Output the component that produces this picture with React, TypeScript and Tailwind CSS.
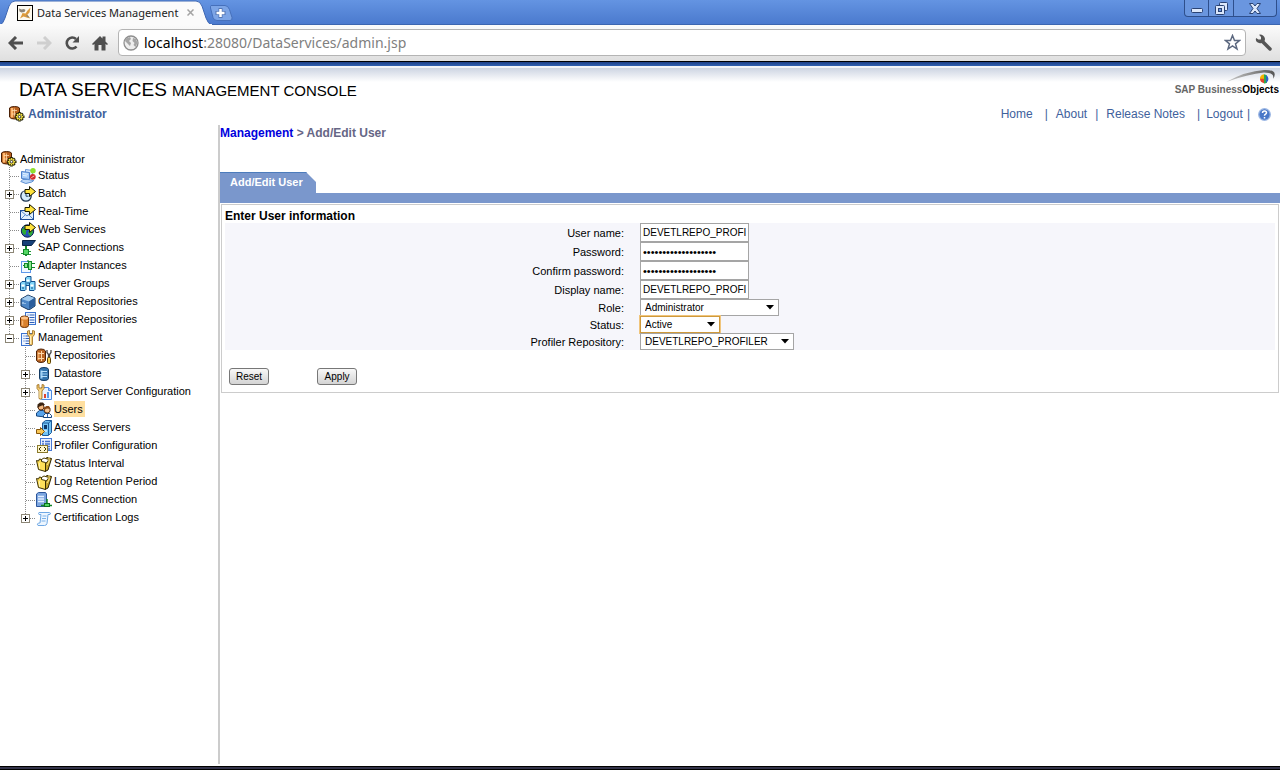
import React, { useState } from "react";

type IconProps = { className?: string };

const Svg = ({ children, className = "" }: { children: React.ReactNode; className?: string }) => (
  <svg viewBox="0 0 16 16" width="16" height="16" className={`shrink-0 ${className}`} aria-hidden="true">
    {children}
  </svg>
);

const Cylinder = ({ x, y, w, h, fill, light, dark }: { x: number; y: number; w: number; h: number; fill: string; light: string; dark: string }) => (
  <g>
    <path
      d={`M${x} ${y + 2}q0-2 ${w / 2}-2t${w / 2} 2v${h - 4}q0 2-${w / 2} 2t-${w / 2}-2z`}
      fill={fill}
      stroke={dark}
    />
    <path d={`M${x + 2} ${y + 3}v${h - 5}`} stroke={light} strokeWidth="2" />
    <path d={`M${x + 1} ${y + h / 2}h${w - 2}`} stroke={light} />
  </g>
);

const Arrow = () => (
  <path d="M5 3.500h4.500V.5L15.500 5.500l-6 5V7.500H5z" fill="#ffe23d" stroke="#1a1a00" strokeLinejoin="round" />
);

const AdminIcon = ({ className }: IconProps) => (
  <Svg className={className}>
    <path d="M.5 2q1-1.500 5-1.500t5 1.500v9q-1 2-5 2t-5-2z" fill="#b8601e" stroke="#4a2006" />
    <path d="M3 2v9.500" stroke="#ffb870" strokeWidth="2.500" />
    <path d="M3 4.500h5M3 8h4M5.500 2.500v8" stroke="#ffdcae" strokeWidth=".8" />
    <path d="M10.500 6v9.500M5.800 10.700h9.700M7.200 7.400l6.600 6.600M13.800 7.400L7.200 14" stroke="#1a1a00" strokeWidth="2.600" />
    <path d="M10.500 7v7.500M6.800 10.700h7.500M7.900 8.100l5.200 5.200M13.100 8.100l-5.200 5.200" stroke="#f8e545" strokeWidth="1.500" />
    <circle cx="10.500" cy="10.700" r="1.300" fill="#fff" stroke="#333" />
  </Svg>
);

const StatusIcon = () => (
  <Svg>
    <path d="M5.500 1.500l7 1v6l-7 .5z" fill="#d9ebff" stroke="#6c98d8" />
    <path d="M1.500 3.500l8 1v7l-8-1z" fill="#a5cbf8" stroke="#4d7fc9" />
    <path d="M3 5.500l5 .7M3 7.500l4 .5" stroke="#e8f4ff" />
    <path d="M.8 13.500l2-2h5l6 1-2 1.500-6 1.500z" fill="#bcd8f8" stroke="#5d8fd2" />
    <circle cx="13" cy="2.800" r="2.700" fill="#8fe02c" />
    <circle cx="12.800" cy="8.800" r="2.900" fill="#d22c2c" />
    <path d="M11.300 9.700l3-1.800" stroke="#ffb9b0" />
  </Svg>
);

const BatchIcon = () => (
  <Svg>
    <circle cx="6" cy="10" r="5.200" fill="#d5ecfb" stroke="#1c3450" strokeWidth="1.300" />
    <path d="M6 7v3.200h2.500" fill="none" stroke="#244466" />
    <path d="M2.500 7.500l1.500-2" stroke="#fff" />
    <Arrow />
  </Svg>
);

const RealTimeIcon = () => (
  <Svg>
    <rect x="0.500" y="6.500" width="13" height="9" fill="#e2effd" stroke="#1e4c9a" />
    <path d="M1 7l6 5 6-5M1 15l4.500-4.500M13 15l-4.500-4.500" fill="none" stroke="#5b8cce" />
    <Arrow />
  </Svg>
);

const WebIcon = () => (
  <Svg>
    <circle cx="7.500" cy="9" r="6.200" fill="#2752b8" stroke="#0c2152" />
    <path d="M2 7l4-2 2 2-2 2v3l-2 1-2-3zM8 10l4-2 1 2-2 4-2-1z" fill="#2eab32" />
    <path d="M3 5l3-2 3 1-3 2z" fill="#6edb62" />
    <Arrow />
  </Svg>
);

const SapIcon = () => (
  <Svg>
    <path d="M2.500 .5h13L11.500 5.500h-9z" fill="#174078" stroke="#0b2448" />
    <path d="M6 6v10" stroke="#178a2c" strokeWidth="2" />
    <path d="M1 13.500h3M8 11.500h3M8 14.500h3" stroke="#1c9a34" />
    <rect x="3.500" y="9.500" width="5" height="5" fill="#53d863" stroke="#178a2c" />
  </Svg>
);

const AdapterIcon = () => (
  <Svg>
    <rect x="1.500" y="3.500" width="9" height="11" fill="#f0f7ff" stroke="#5e97ea" />
    <path d="M3 7.500h4M11 5.500h4M11 9.500h4M8 2v2" stroke="#128528" strokeWidth="1.200" />
    <rect x="4.500" y="5.500" width="3" height="4" fill="#8aea90" stroke="#138929" />
    <rect x="8.500" y="3.500" width="3" height="8" fill="#8aea90" stroke="#138929" />
  </Svg>
);

const ServerBox = ({ x, y }: { x: number; y: number }) => (
  <g>
    <path d={`M${x} ${y + 1.5}l1.500-1.500h4v8l-1 1H${x}z`} fill="#7fd4f8" stroke="#12508e" />
    <rect x={x + 1} y={y + 3} width="3" height="2" fill="#fff" />
    <path d={`M${x + 1.5} ${y + 6.5}h2`} stroke="#114c88" />
  </g>
);

const ServerGroupIcon = () => (
  <Svg>
    <ServerBox x={5.5} y={0.5} />
    <ServerBox x={0.5} y={5.5} />
    <ServerBox x={9.5} y={5.5} />
  </Svg>
);

const CentralIcon = () => (
  <Svg>
    <path d="M1 5l7-4 7 3v8l-6 4-8-4z" fill="#4c86c6" stroke="#17365c" />
    <path d="M1.500 5L8 1.500 14.500 4 9 7.500z" fill="#a3cbee" />
    <path d="M9 7.500L14.500 4v7.500L9 15z" fill="#2c5e9c" />
    <path d="M3 8v2M5 9v1" stroke="#d6ecff" />
  </Svg>
);

const ListPage = ({ x, y }: { x: number; y: number }) => (
  <g>
    <rect x={x} y={y} width="10" height="12" fill="#eef5ff" stroke="#3c73d0" />
    <path d={`M${x + 2} ${y + 2.5}h1M${x + 4} ${y + 2.5}h5M${x + 2} ${y + 5}h1M${x + 4} ${y + 5}h5M${x + 2} ${y + 7.5}h1M${x + 4} ${y + 7.5}h5M${x + 4} ${y + 10}h5`} stroke="#2f5fb8" />
  </g>
);

const ProfilerIcon = () => (
  <Svg>
    <ListPage x={5.5} y={0.5} />
    <path d="M.5 6q0-2 4-2t4 2v7.500q0 2-4 2t-4-2z" fill="#d9812f" stroke="#6f3409" />
    <ellipse cx="4.500" cy="6" rx="3.500" ry="1.500" fill="#ffc48a" />
    <path d="M2.500 8.500v5" stroke="#f7b474" strokeWidth="1.500" />
  </Svg>
);

const Wrench = ({ x }: { x: number }) => (
  <g transform={`translate(${x} 0)`}>
    <path
      d="M.5 1v3.500L2.500 7v7.500q1.500 1.500 3 0V7l2-2.500V1L5.500.5V4h-3V.5z"
      fill="#f6cf76"
      stroke="#9a6a1c"
      strokeWidth=".8"
    />
    <path d="M3.500 6v8" stroke="#fff0c0" />
  </g>
);

const ManagementIcon = () => (
  <Svg>
    <ListPage x={1.5} y={3.5} />
    <Wrench x={7} />
  </Svg>
);

const RepositoriesIcon = () => (
  <Svg>
    <path d="M.5 3q1-2 4.500-2t4.500 2v9.500q-1 2-4.500 2t-4.500-2z" fill="#b96524" stroke="#4f2306" />
    <path d="M2.500 4v8" stroke="#eda45e" strokeWidth="2" />
    <path d="M2 5.500h6M2 10.500h6M5.500 3v10" stroke="#ffd9a8" />
    <path d="M11 2v2.500l1.500 2v3h1v-3l1.500-2V2" fill="none" stroke="#4a4a4a" strokeWidth="1.300" />
    <rect x="11.500" y="9.500" width="3" height="6" rx="1" fill="#f8d14c" stroke="#5e4200" />
  </Svg>
);

const DatastoreIcon = () => (
  <Svg>
    <Cylinder x={3.5} y={1.5} w={9} h={13} fill="#3274ae" light="#9ed0f4" dark="#123a62" />
    <path d="M5 5.500h6M5 10.500h6" stroke="#b9e0fa" />
  </Svg>
);

const ReportIcon = () => (
  <Svg>
    <path d="M5.500 3.500h7l3 3v9h-10z" fill="#e9f3ff" stroke="#4d8ae0" />
    <path d="M12.500 3.500v3h3" fill="#9cc4f5" stroke="#4d8ae0" />
    <rect x="8" y="10" width="2" height="4" fill="#e0442d" />
    <rect x="11" y="8" width="2" height="6" fill="#5c9be8" />
    <Wrench x={0.5} />
  </Svg>
);

const UsersIcon = () => (
  <Svg>
    <path d="M.5 14v-3l3-2.500h4l2 3V15z" fill="#57a2ea" stroke="#16457c" />
    <circle cx="5" cy="5" r="3" fill="#f3b880" stroke="#5b3010" />
    <path d="M1.500 6V2.500L4 .5h3L9 3 6 3.500 3.500 4.500z" fill="#3a2412" />
    <path d="M7.500 15.500v-2l2-2h4l2 2v2z" fill="#f4f8ff" stroke="#16457c" />
    <circle cx="11.200" cy="8" r="3" fill="#f8c795" stroke="#5b3010" />
    <path d="M8 8V5.500L10.500 4H13l1.700 3L11 6.500z" fill="#8a4a18" />
    <path d="M11.500 12v3" stroke="#2a64b8" />
  </Svg>
);

const AccessIcon = () => (
  <Svg>
    <path d="M6.500 3l3-2.500h6v12l-3 3h-6z" fill="#72c3f5" stroke="#1c5a9a" />
    <path d="M12.500 3v12M6.500 3h6l3-2.500" fill="none" stroke="#1c5a9a" />
    <rect x="8" y="5" width="3" height="4" fill="#0c3768" />
    <path d="M8 11h3" stroke="#fff" />
    <path d="M.5 9.500h4v-2l4 4-4 4v-2h-4z" fill="#f8c655" stroke="#86560c" />
  </Svg>
);

const ProfilerConfigIcon = () => (
  <Svg>
    <rect x="4.500" y=".5" width="11" height="12" fill="#eaf1ff" stroke="#4a79d4" />
    <path d="M6 3.500h2M9 3.500h5M6 6h2M9 6h5M9 8.500h5M11 11h3" stroke="#4673cc" strokeWidth="1.300" />
    <rect x="1.500" y="7.500" width="10" height="7" fill="#fff7cd" stroke="#8b7a2c" />
    <path d="M5 9l-2 2 2 2M8 9l2 2-2 2" fill="none" stroke="#3c3200" />
  </Svg>
);

const FolderIcon = () => (
  <Svg>
    <path d="M8 4l3-2.500 4.500 1L12 14l-3 1.500z" fill="#c9a62a" stroke="#2b2200" />
    <path d="M3 5l5-3 5 1.500-4 5z" fill="#fff" stroke="#4d3d00" />
    <path d="M.5 4.500l2 .5 1-2 2 .5v2l4 1v9l-7-2z" fill="#ffe05a" stroke="#3b2f00" />
    <path d="M3.500 7v6" stroke="#fff3a8" />
    <path d="M13 1v5l-2 3" fill="none" stroke="#ffe98a" />
  </Svg>
);

const CmsIcon = () => (
  <Svg>
    <path d="M.5 2l2-1.500h7l1 1.500v11l-2 1.500h-8z" fill="#7ca6e0" stroke="#2c569c" />
    <path d="M2 4.500h6M2 7h6M2 9.500h6" stroke="#e2efff" strokeWidth="1.300" />
    <path d="M5 13.500h11M11 7v5" stroke="#128528" strokeWidth="1.500" />
    <rect x="8.500" y="11.500" width="5" height="3" fill="#4fd85e" stroke="#0c7020" />
  </Svg>
);

const CertIcon = () => (
  <Svg>
    <path d="M3 2.500h10.500q1.500 0 .5 2h-2l-1 9q-.5 2-2.500 2H2q-1.500-1.500.5-2.500H4L5 4.500H3q-1-1 0-2z" fill="#edf6ff" stroke="#6fa8e4" />
    <path d="M6.500 6h4M6 8.500h4M5.500 11h4" stroke="#7db2e8" />
  </Svg>
);

type Node = { label: string; icon: () => React.ReactElement; expand?: "+" | "-"; current?: boolean; children?: Node[] };

const tree: Node[] = [
  { label: "Status", icon: StatusIcon },
  { label: "Batch", icon: BatchIcon, expand: "+" },
  { label: "Real-Time", icon: RealTimeIcon },
  { label: "Web Services", icon: WebIcon },
  { label: "SAP Connections", icon: SapIcon, expand: "+" },
  { label: "Adapter Instances", icon: AdapterIcon },
  { label: "Server Groups", icon: ServerGroupIcon, expand: "+" },
  { label: "Central Repositories", icon: CentralIcon, expand: "+" },
  { label: "Profiler Repositories", icon: ProfilerIcon, expand: "+" },
  {
    label: "Management",
    icon: ManagementIcon,
    expand: "-",
    children: [
      { label: "Repositories", icon: RepositoriesIcon },
      { label: "Datastore", icon: DatastoreIcon, expand: "+" },
      { label: "Report Server Configuration", icon: ReportIcon, expand: "+" },
      { label: "Users", icon: UsersIcon, current: true },
      { label: "Access Servers", icon: AccessIcon },
      { label: "Profiler Configuration", icon: ProfilerConfigIcon },
      { label: "Status Interval", icon: FolderIcon },
      { label: "Log Retention Period", icon: FolderIcon },
      { label: "CMS Connection", icon: CmsIcon },
      { label: "Certification Logs", icon: CertIcon, expand: "+" },
    ],
  },
];

const Branch = ({ expand, last }: { expand?: "+" | "-"; last: boolean }) => {
  const drawing = (
    <svg width="20" height="18" viewBox="0 0 20 18" className="block" aria-hidden="true">
      <path d={last ? "M9.500 0v10" : "M9.500 0v18"} stroke="#8a8a8a" strokeDasharray="1 1" />
      <path d="M10 9.500h10" stroke="#8a8a8a" strokeDasharray="1 1" />
      {expand && (
        <>
          <rect x="5.500" y="5.500" width="8" height="8" fill="#fff" stroke="#8c8676" />
          <path d={expand === "+" ? "M7 9.500h5M9.500 7v5" : "M7 9.500h5"} stroke="#000" />
        </>
      )}
    </svg>
  );
  return expand ? (
    <button type="button" aria-label={expand === "+" ? "Expand" : "Collapse"} className="shrink-0">
      {drawing}
    </button>
  ) : (
    <span className="shrink-0">{drawing}</span>
  );
};

const TreeList = ({ nodes, nested = false }: { nodes: Node[]; nested?: boolean }) => (
  <ul className={nested ? "pl-4" : ""}>
    {nodes.map((n, i) => (
      <li key={n.label}>
        <div className="flex h-[18px] items-center">
          <Branch expand={n.expand} last={i === nodes.length - 1} />
          <n.icon />
          <a href="#" className={`ml-0.5 self-start pr-0.5 leading-4 whitespace-nowrap ${n.current ? "bg-[#ffdf9f]" : ""}`}>
            {n.label}
          </a>
        </div>
        {n.children && <TreeList nodes={n.children} nested />}
      </li>
    ))}
  </ul>
);

const TitleBar = () => (
  <div className="flex h-[25px] items-start border-b border-[#3c66b0] bg-linear-to-b from-[#6494e2] to-[#4b7ace]">
    <div className="relative h-[25px] w-[210px] shrink-0">
      <svg className="absolute inset-0" width="212" height="25" viewBox="0 0 212 25" aria-hidden="true">
        <path d="M0 25Q3 24 5 18L9 6Q11 1 15 1H196Q200 1 202 6L206 18Q208 24 212 25z" fill="#fbfbfb" stroke="#3f68b4" />
        <path d="M0 24h212v1H0z" fill="#fbfbfb" />
      </svg>
      <div className="relative flex h-full items-center pl-[17px]">
        <svg width="16" height="16" viewBox="0 0 16 16" aria-hidden="true">
          <rect x=".5" y=".5" width="15" height="15" fill="#fdfaf0" stroke="#000" />
          <path d="M13.500 2.500l-1 5-2 2 1 2 2 2-4-1-3-1-3.500 2 1.500-3 1-2.500 3 .5 2-3z" fill="#dc9a3c" />
          <path d="M2 3.500l2.500 1L7 4l1.500 1-1 2-3 .5-2-1zM9 10l2 .5 1.500 2-2.500-.5z" fill="#8d8577" />
        </svg>
        <span className="ml-1 w-[148px] overflow-hidden font-['Noto_Sans',sans-serif] text-[11px] leading-4 whitespace-nowrap text-[#222]">
          Data Services Management
        </span>
        <button type="button" aria-label="Close tab" className="ml-0.5">
          <svg width="7" height="7" viewBox="0 0 7 7" aria-hidden="true">
            <path d="M.5.5l6 6M6.500.5l-6 6" stroke="#a4a4a4" strokeWidth="1.500" />
          </svg>
        </button>
      </div>
    </div>
    <button type="button" aria-label="New tab" className="mt-[5px]">
      <svg width="23" height="16" viewBox="0 0 23 16" aria-hidden="true">
        <path d="M1 .5h14q3 0 4.500 4l2.500 8q.5 3-2 3H7q-3 0-4-3L.5 3Q0 .5 1 .5z" fill="#7da5e6" stroke="#4670bb" />
        <path d="M10.500 3v10M5.500 8h10" stroke="#5577b4" strokeWidth="4" />
        <path d="M10.500 4v8M6.500 8h8" stroke="#fff" strokeWidth="2.500" />
      </svg>
    </button>
    <div className="mr-[3px] ml-auto flex h-[17px] overflow-hidden rounded-b border border-t-0 border-[#2e4f8c] bg-[#6a96df]">
      <button type="button" aria-label="Minimize" className="flex w-6 items-center justify-center border-r border-[#2e4f8c]">
        <svg width="12" height="12" viewBox="0 0 12 12" aria-hidden="true">
          <rect x=".5" y="6.500" width="11" height="4" rx="1" fill="#dbe7fb" stroke="#2a4374" />
        </svg>
      </button>
      <button type="button" aria-label="Restore" className="flex w-[25px] items-center justify-center border-r border-[#2e4f8c]">
        <svg width="13" height="13" viewBox="0 0 13 13" aria-hidden="true">
          <rect x="4.500" y=".5" width="8" height="8" rx="1" fill="#dbe7fb" stroke="#2a4374" />
          <rect x=".5" y="3.500" width="9" height="9" rx="1" fill="#dbe7fb" stroke="#2a4374" />
          <rect x="3.500" y="6.500" width="3" height="3" fill="#6a96df" stroke="#2a4374" />
        </svg>
      </button>
      <button type="button" aria-label="Close" className="flex w-[42px] items-center justify-center">
        <svg width="12" height="11" viewBox="0 0 12 11" aria-hidden="true">
          <path d="M.5.5h3.500l2 2.500 2-2.500h3.500l-3.500 5 3.500 5H8L6 8l-2 2.500H.5l3.500-5z" fill="#dbe7fb" stroke="#2a4374" />
        </svg>
      </button>
    </div>
  </div>
);

const Toolbar = () => (
  <div className="flex h-9 items-center bg-linear-to-b from-[#fbfbfb] to-[#dfdfdf] pb-px pl-2">
    <button type="button" aria-label="Back">
      <svg width="16" height="14" viewBox="0 0 16 14" aria-hidden="true">
        <path d="M8 1L2 7l6 6M2 7h13" fill="none" stroke="#4f4f4f" strokeWidth="3" />
      </svg>
    </button>
    <button type="button" aria-label="Forward" className="ml-3">
      <svg width="16" height="14" viewBox="0 0 16 14" aria-hidden="true">
        <path d="M8 1l6 6-6 6M14 7H1" fill="none" stroke="#cfcfcf" strokeWidth="3" />
      </svg>
    </button>
    <button type="button" aria-label="Reload" className="ml-3">
      <svg width="16" height="16" viewBox="0 0 16 16" aria-hidden="true">
        <path d="M12.500 11.500A5.500 5.500 0 1 1 12 4" fill="none" stroke="#4f4f4f" strokeWidth="2.600" />
        <path d="M15 1v6.500H8.500z" fill="#4f4f4f" />
      </svg>
    </button>
    <button type="button" aria-label="Home page" className="ml-3">
      <svg width="16" height="16" viewBox="0 0 16 16" aria-hidden="true">
        <path d="M8 1l2.500 2.500V1.500h3v5L16 9l-1 1-1.500-1v6.500h-4V10h-3v5.500h-4V9L1 10 0 9z" fill="#4f4f4f" />
      </svg>
    </button>
    <div className="ml-2.5 flex h-[27px] min-w-0 flex-1 items-center rounded border border-[#b4b4b4] bg-white px-1">
      <svg width="16" height="16" viewBox="0 0 16 16" className="shrink-0" aria-hidden="true">
        <circle cx="8" cy="8" r="7" fill="#eee" stroke="#8e8e8e" strokeWidth="1.300" />
        <path d="M3 3.500l4-1.500 1 2-2 2 2 2-1 3-3-3-2-2zM10 3l3 1 1.500 4-2 4-2-2 1-2-2-2z" fill="#a5a5a5" />
      </svg>
      <a href="#" className="ml-[5px] truncate font-['Noto_Sans',sans-serif] text-[14px] leading-6 text-[#808080]">
        <span className="text-black">localhost</span>:28080/DataServices/admin.jsp
      </a>
      <button type="button" aria-label="Bookmark" className="ml-auto shrink-0">
        <svg width="17" height="17" viewBox="0 0 17 17" aria-hidden="true">
          <path d="M8.500 1.500l2 5h5l-4 3.300 1.500 5.200-4.500-3-4.500 3 1.500-5.200-4-3.300h5z" fill="#fff" stroke="#5d6980" strokeWidth="1.500" />
        </svg>
      </button>
    </div>
    <button type="button" aria-label="Settings" className="mr-2 ml-[9px] shrink-0">
      <svg width="17" height="17" viewBox="0 0 17 17" aria-hidden="true">
        <path d="M7 7l8 8" stroke="#555" strokeWidth="3.500" strokeLinecap="round" />
        <path d="M4 .8L6 3v2.500H3.500L1 4Q0 8 4 9q4 1 5.500-2T8 1.500Q6 0 4 .8z" fill="#555" />
      </svg>
    </button>
  </div>
);

const Logo = () => (
  <div className="relative flex h-[30px] shrink-0 items-end">
    <svg className="absolute top-0 right-0" width="58" height="20" viewBox="0 0 58 20" aria-hidden="true">
      <defs>
        <linearGradient id="swoosh" x1="0" x2="1">
          <stop offset="0" stopColor="#ccc" />
          <stop offset="1" stopColor="#555" />
        </linearGradient>
      </defs>
      <path d="M4 14Q24 3 42 2q15-.5 9 9 2-6.500-9-6.500Q26 6 4 14z" fill="url(#swoosh)" />
      <path d="M42 6.200a4.500 4.500 0 0 0-4 5h4z" fill="#f4b400" />
      <path d="M42 6.200a4.500 4.500 0 0 1 3 1.500v7a4.500 4.500 0 0 1-3 .8z" fill="#2fa84f" />
      <path d="M38 10.800h4v4.500q-4-1-4-4.500z" fill="#e0442d" />
      <path d="M44 7a4.500 4.500 0 0 1 0 8z" fill="#2a64c8" />
    </svg>
    <span className="relative pr-px text-[10px] leading-4 font-bold whitespace-nowrap text-[#666]">
      SAP Business<span className="text-black">Objects</span>
    </span>
  </div>
);

const Header = () => (
  <header className="border-t border-black">
    <div className="h-1 bg-linear-to-b from-[#1d3f86] to-[#3262b2]" />
    <div className="h-0.5 bg-[#f2f4f8]" />
    <div className="flex justify-between bg-linear-to-b from-[#cdd4e2] to-white to-40% pl-[19px]">
      <h1 className="pt-2.5 text-[19px] leading-6 whitespace-nowrap text-black">
        DATA SERVICES <span className="text-[15px]">MANAGEMENT CONSOLE</span>
      </h1>
      <Logo />
    </div>
    <div className="flex h-[22px] items-center pr-[9px] pl-[9px] text-[12px] text-[#40619c]">
      <AdminIcon />
      <span className="ml-[3px] font-bold">Administrator</span>
      <nav className="ml-auto flex items-center">
        <a href="#">Home</a>
        <span className="mr-2 ml-3">|</span>
        <a href="#">About</a>
        <span className="mr-2 ml-2">|</span>
        <a href="#">Release Notes</a>
        <span className="mr-1.5 ml-3">|</span>
        <a href="#">Logout</a>
        <span className="mr-2 ml-1">|</span>
        <a href="#" aria-label="Help">
          <svg width="13" height="13" viewBox="0 0 13 13" aria-hidden="true">
            <circle cx="6.500" cy="6.500" r="5.800" fill="#4a78c8" stroke="#9db8e4" strokeWidth="1.300" />
            <path d="M4.500 5q0-2 2-2t2 1.800q0 1-1.200 1.500-.8.400-.8 1.500M6.500 9v1.500" fill="none" stroke="#fff" strokeWidth="1.500" />
          </svg>
        </a>
      </nav>
    </div>
  </header>
);

const fieldStyle = "block border border-[#a5a5a5] bg-white text-black outline-none";

const TextField = ({ label, id, type = "text", value }: { label: string; id: string; type?: string; value: string }) => {
  const [text, setText] = useState(value);
  return (
    <tr>
      <th scope="row" className="w-[38%] text-right font-normal">
        <label htmlFor={id}>{label}:</label>
      </th>
      <td className="pl-4">
        <input
          id={id}
          type={type}
          value={text}
          onChange={(e) => setText(e.target.value)}
          className={`${fieldStyle} h-[19px] w-[109px] px-0.5 ${type === "password" ? "text-[11px]" : "text-[10px]"}`}
        />
      </td>
    </tr>
  );
};

const SelectField = ({ label, id, value, width, active = false }: { label: string; id: string; value: string; width: string; active?: boolean }) => (
  <tr>
    <th scope="row" className="w-[38%] text-right font-normal">
      <label htmlFor={id}>{label}:</label>
    </th>
    <td className="pl-4">
      <div className={`relative ${width}`}>
        <select
          id={id}
          defaultValue={value}
          className={`${fieldStyle} h-[17px] w-full appearance-none pl-1 text-[10px] ${active ? "border-[#cf9a3c] ring-1 ring-[#f0c57c]" : ""}`}
        >
          <option>{value}</option>
        </select>
        <svg className="pointer-events-none absolute top-1.5 right-[5px]" width="8" height="5" viewBox="0 0 8 5" aria-hidden="true">
          <path d="M0 0h8L4 4.500z" fill="#000" />
        </svg>
      </div>
    </td>
  </tr>
);

const buttonStyle =
  "h-[17px] min-w-10 rounded-[3px] border border-[#777] bg-linear-to-b from-[#f8f8f8] to-[#d4d4d4] px-1.5 text-[10px] leading-[15px] text-black";

const UserForm = () => (
  <form className="mt-px mr-px ml-px border border-[#ccc] px-[3px] pt-1 pb-[7px]" onSubmit={(e) => e.preventDefault()}>
    <h2 className="text-[12px] leading-[14px] font-bold">Enter User information</h2>
    <table className="w-full border-collapse bg-[#f6f6fb]">
      <tbody>
        <TextField label="User name" id="user" value="DEVETLREPO_PROFILER" />
        <TextField label="Password" id="password" type="password" value="devetlrepo_profiler" />
        <TextField label="Confirm password" id="confirm" type="password" value="devetlrepo_profiler" />
        <TextField label="Display name" id="display" value="DEVETLREPO_PROFILER" />
        <SelectField label="Role" id="role" value="Administrator" width="w-[139px]" />
        <SelectField label="Status" id="status" value="Active" width="w-[80px]" active />
        <SelectField label="Profiler Repository" id="repository" value="DEVETLREPO_PROFILER" width="w-[154px]" />
      </tbody>
    </table>
    <div className="mt-[18px] flex gap-12 pl-1">
      <button type="reset" className={buttonStyle}>
        Reset
      </button>
      <button type="submit" className={buttonStyle}>
        Apply
      </button>
    </div>
  </form>
);

export default function App() {
  return (
    <div className="flex min-h-screen flex-col bg-white font-['Liberation_Sans',Arial,sans-serif] text-[11px] leading-4 text-black">
      <TitleBar />
      <Toolbar />
      <Header />
      <div className="flex flex-1">
        <aside className="mb-0.5 w-[220px] shrink-0 border-r-2 border-[#ccc] pt-[26px]">
          <div className="flex h-4 items-center pl-px">
            <AdminIcon />
            <a href="#" className="ml-[3px]">
              Administrator
            </a>
          </div>
          <TreeList nodes={tree} />
        </aside>
        <main className="min-w-0 flex-1">
          <p className="text-[12px] font-bold text-[#666685]">
            <a href="#" className="text-[#0000dd]">
              Management
            </a>{" "}
            &gt; Add/Edit User
          </p>
          <div className="mt-[31px] flex border-b-[10px] border-[#7a97cc]">
            <a
              href="#"
              className="h-[21px] w-24 border-t border-[#4c7cbc] bg-[#7a97cc] pl-2.5 leading-[19px] font-bold text-white [clip-path:polygon(0_0,calc(100%-10px)_0,100%_10px,100%_100%,0_100%)]"
            >
              Add/Edit User
            </a>
          </div>
          <UserForm />
        </main>
      </div>
      <footer className="h-1 border-y border-black bg-[#33334a]" />
    </div>
  );
}
